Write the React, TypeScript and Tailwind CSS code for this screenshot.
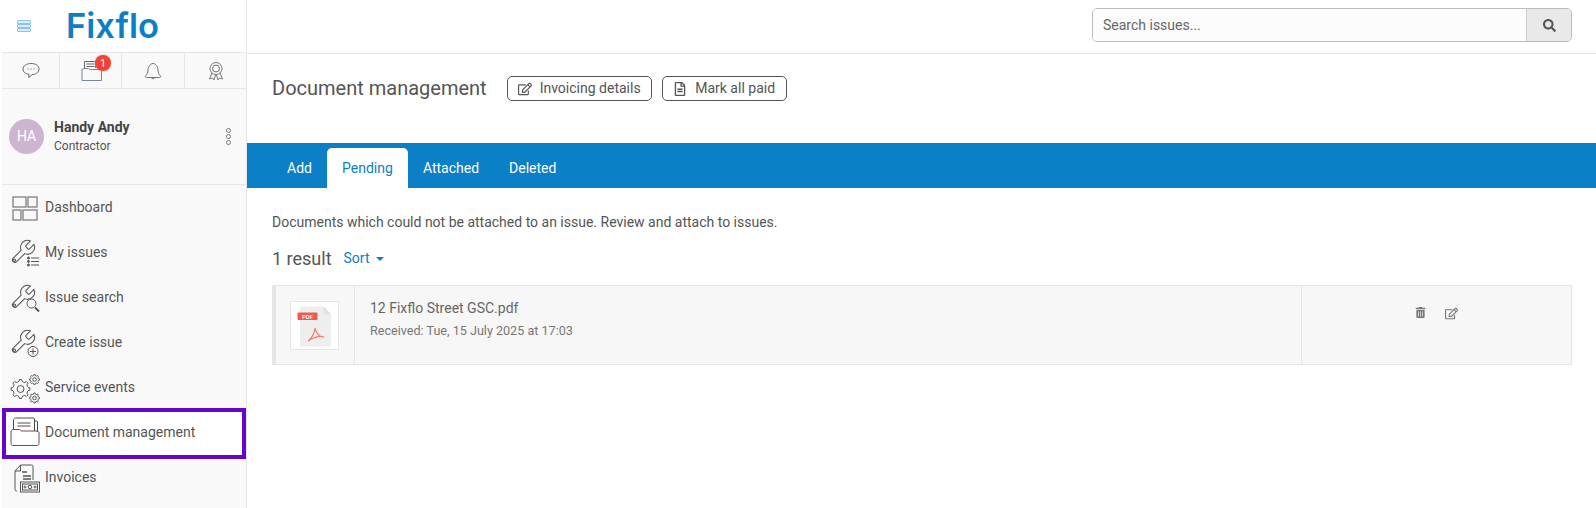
import React from "react";
import { FaSearch, FaRegEdit, FaTrashAlt, FaRegFileAlt } from "react-icons/fa";

const S = { fill: "none", stroke: "#555", strokeWidth: 1 } as const;

const Wrench = () => (
  <g transform="translate(0 1) scale(1.16)" fill="none" stroke="#555" strokeWidth="0.9">
    <path d="M14.700 6.300a1 1 0 0 0 0 1.400l1.600 1.600a1 1 0 0 0 1.400 0l3.770-3.770a6 6 0 0 1-7.940 7.940l-6.910 6.910a2.120 2.120 0 0 1-3-3l6.910-6.910a6 6 0 0 1 7.940-7.940l-3.760 3.760z" />
    <circle cx="4.600" cy="19.200" r="1.100" />
  </g>
);

function gearPath(cx: number, cy: number, r: number, teeth: number) {
  const out: string[] = [];
  const step = (Math.PI * 2) / teeth;
  for (let i = 0; i < teeth; i++) {
    const a = i * step;
    const pts: [number, number][] = [
      [r * 0.78, a - step * 0.5],
      [r * 0.82, a - step * 0.26],
      [r, a - step * 0.16],
      [r, a + step * 0.16],
      [r * 0.82, a + step * 0.26],
    ];
    for (const [rad, ang] of pts) {
      out.push(`${(cx + rad * Math.cos(ang)).toFixed(2)} ${(cy + rad * Math.sin(ang)).toFixed(2)}`);
    }
  }
  return "M" + out.join("L") + "Z";
}

const icons: Record<string, React.ReactNode> = {
  dash: (
    <g fill="none" stroke="#808080" strokeWidth="1.300">
      <rect x="4" y="5" width="13" height="10" /><rect x="19" y="5" width="9" height="10" /><rect x="4" y="18" width="8" height="10" /><rect x="14" y="18" width="14" height="10" />
    </g>
  ),
  list: (
    <g><Wrench /><g {...S}><path d="M22 21h8M22 24.500h8M22 28h8" strokeWidth="1.200" /><circle cx="19.500" cy="21" r="1" fill="#555" /><circle cx="19.500" cy="24.500" r="1" fill="#555" /><circle cx="19.500" cy="28" r="1" fill="#555" /></g></g>
  ),
  search: (
    <g><Wrench /><g {...S}><circle cx="22.500" cy="21.500" r="4.500" /><path d="M26 25.500l4 4" strokeWidth="2" /></g></g>
  ),
  plus: (
    <g><Wrench /><g {...S}><circle cx="24" cy="24.500" r="5" /><path d="M24 21.500v6M21 24.500h6" /></g></g>
  ),
  gear: (
    <g {...S}>
      <path d={gearPath(11.5, 17, 9.5, 8)} />
      <circle cx="11.500" cy="17" r="3.500" />
      <path d={gearPath(25.5, 7.5, 5, 8)} /><circle cx="25.500" cy="7.500" r="1.800" />
      <path d={gearPath(25.5, 26, 5, 8)} /><circle cx="25.500" cy="26" r="1.800" />
    </g>
  ),
  doc: (
    <g {...S} stroke="#4a4a4a">
      <path d="M4.500 12V3c0-1 1-2 2-2h18c.5 0 1 .5 1 1v12" /><path d="M25.500 4h2c.5 0 1 .5 1 1v10" />
      <path d="M8.500 6h13M8.500 9h13" strokeWidth="1.200" />
      <path d="M2 15c0-1.500 1-2.500 2-2.500h6.500l2 1.500H28c1 0 2 1 2 2v10.500c0 1-1 2-2 2H4c-1 0-2-1-2-2z" stroke="#6a4a5a" />
    </g>
  ),
  inv: (
    <g {...S}>
      <path d="M8 29H7.500c-1 0-1.500-.5-1.500-1.500V9l5.500-6h11c1 0 1.500.5 1.500 1.500V18" />
      <path d="M6 9h5.500V3" />
      <path d="M13 10h5M14 14h8M14 17h8" strokeWidth="1.300" />
      <rect x="11.500" y="20" width="19" height="10" />
      <rect x="13.500" y="22" width="15" height="6" />
      <circle cx="21" cy="25" r="1.800" /><circle cx="16" cy="25" r="1" /><circle cx="26" cy="25" r="1" />
    </g>
  ),
};

const NavIcon = ({ k }: { k: string }) => (
  <svg width="32" height="32" viewBox="0 0 32 32" className="shrink-0">{icons[k]}</svg>
);

const nav = [
  ["dash", "Dashboard"],
  ["list", "My issues"],
  ["search", "Issue search"],
  ["plus", "Create issue"],
  ["gear", "Service events"],
  ["doc", "Document management"],
  ["inv", "Invoices"],
];

export default function App() {
  return (
    <div className="flex h-[508px] w-[1596px] overflow-hidden bg-white text-[14px] text-[#555] font-['Roboto',sans-serif]">
      <aside className="ml-[2px] flex w-[245px] shrink-0 flex-col border-r border-[#e6e6e6] bg-[#f9f9f9]">
        <div className="flex h-[53px] shrink-0 items-center border-b border-[#e6e6e6] bg-white pl-[15px]">
          <div className="flex w-[14px] flex-col">
            <span className="h-[4px] rounded-[1px] border border-[#8cc4e6] bg-[#d9ecf8]" />
            <span className="h-[4px] rounded-[1px] border border-[#8cc4e6] bg-[#d9ecf8]" />
            <span className="h-[4px] rounded-[1px] border border-[#8cc4e6] bg-[#d9ecf8]" />
          </div>
          <span className="ml-[35px] font-['Inter',sans-serif] text-[34.500px] font-semibold leading-none text-[#0c80c6]">Fixflo</span>
        </div>

        <div className="flex h-[36px] shrink-0 border-b border-[#e6e6e6]">
          <div className="flex w-[58px] items-center justify-center border-r border-[#e6e6e6]">
            <svg width="18" height="17" viewBox="0 0 18 17" fill="none" stroke="#666" strokeWidth="1"><path d="M9 1.500c4.500 0 8 2 8 5.500s-3.500 5.500-7 5.500c-.5 1-2 2.500-3.500 3 .5-1 .5-2 .5-3.300C3.500 12 1 10 1 7s3.500-5.500 8-5.500z" /><path d="M5.500 7h1M8.500 7h1M11.500 7h1" /></svg>
          </div>
          <div className="relative flex w-[62px] items-center justify-start border-r border-[#e6e6e6] pl-[21px]">
            <svg width="22" height="22" viewBox="0 0 22 22" fill="none" stroke="#666" strokeWidth="1"><path d="M3.500 8V1.500h11V8" /><path d="M5.500 4h8M5.500 6.500h8" /><path d="M1 10c0-1 .5-1.500 1.500-1.500h5l1.500 1h10c1 0 1.500.5 1.500 1.500v9.500H1z" stroke="#77859a" /></svg>
            <span className="absolute left-[35px] top-[2px] flex h-[16px] w-[16px] items-center justify-center rounded-full bg-[#f44336] text-[10px] text-white shadow-[0_0_2px_#aaa]">1</span>
          </div>
          <div className="flex w-[63px] items-center justify-center border-r border-[#e6e6e6]">
            <svg width="18" height="20" viewBox="0 0 18 20" fill="none" stroke="#777" strokeWidth="1"><path d="M1.500 15c1.500-1.500 2.500-3 2.500-6s2-6.500 5-6.500 5 3.500 5 6.500 1 4.500 2.500 6c.5 1 0 1.500-1 1.500h-13c-1 0-1.500-.5-1-1.500z" /><path d="M7 16.500c.5 1.700 3.500 1.700 4 0" /></svg>
          </div>
          <div className="flex flex-1 items-center justify-center">
            <svg width="18" height="20" viewBox="0 0 18 20" fill="none" stroke="#777" strokeWidth="1"><circle cx="9" cy="7.500" r="6" /><circle cx="9" cy="7.500" r="3.500" /><path d="M5 12l-2.500 6 3-1 1.500 2 1.500-5M13 12l2.500 6-3-1-1.500 2-1.500-5" /></svg>
          </div>
        </div>

        <div className="flex h-[96px] shrink-0 items-center border-b border-[#e6e6e6] pl-[7px] pr-[15px]">
          <div className="flex h-[35px] w-[35px] items-center justify-center rounded-full bg-[#cdb4d0] text-[14px] text-white">HA</div>
          <div className="ml-[10px] mb-[2px] flex-1">
            <div className="text-[14px] font-bold leading-[20px] text-[#444]">Handy Andy</div>
            <div className="text-[12px] leading-[18px]">Contractor</div>
          </div>
          <div className="flex flex-col gap-[1px]">
            <span className="h-[5px] w-[5px] rounded-full border border-[#777]" />
            <span className="h-[5px] w-[5px] rounded-full border border-[#777]" />
            <span className="h-[5px] w-[5px] rounded-full border border-[#777]" />
          </div>
        </div>

        <nav className="flex flex-col">
          {nav.map(([k, label]) =>
            k === "doc" ? (
              <div key={k} className="relative -mt-[2px] -mb-[4px] flex h-[51px] items-center gap-[4px] border-[4px] border-[#6606c9] bg-white pb-[2px] pl-[3px]">
                <NavIcon k={k} />
                <span>{label}</span>
              </div>
            ) : (
              <div key={k} className="flex h-[45px] items-center gap-[4px] pl-[7px]">
                <NavIcon k={k} />
                <span>{label}</span>
              </div>
            )
          )}
        </nav>
      </aside>

      <main className="flex min-w-0 flex-1 flex-col">
        <div className="flex h-[54px] shrink-0 items-start justify-end border-b border-[#e6e6e6] pr-[24px] pt-[8px]">
          <div className="flex h-[34px] w-[480px] overflow-hidden rounded-[5px] border border-[#bbb]">
            <div className="flex flex-1 items-center bg-[#fcfcfc] pl-[10px] text-[#666]">Search issues...</div>
            <div className="flex w-[45px] items-center justify-center border-l border-[#ccc] bg-[#e9e9e9] text-[#555]"><FaSearch size={13} /></div>
          </div>
        </div>

        <div className="flex h-[89px] shrink-0 items-start pl-[25px] pt-[20px]">
          <h1 className="text-[20px] font-normal leading-[28px] text-[#555]">Document management</h1>
          <button className="ml-[20px] mt-[2px] flex h-[25px] w-[145px] items-center justify-center gap-[8px] rounded-[5px] border border-[#555] text-[14px]">
            <FaRegEdit size={14} /> Invoicing details
          </button>
          <button className="ml-[10px] mt-[2px] flex h-[25px] w-[125px] items-center justify-center gap-[8px] rounded-[5px] border border-[#555] text-[14px]">
            <FaRegFileAlt size={14} /> Mark all paid
          </button>
        </div>

        <div className="flex h-[45px] shrink-0 items-end bg-[#0c80c6] pl-[25px] text-white">
          <div className="flex h-[40px] items-center px-[15px]">Add</div>
          <div className="flex h-[40px] w-[81px] items-center justify-center rounded-t-[5px] bg-white text-[#0c80c6]">Pending</div>
          <div className="flex h-[40px] items-center px-[15px]">Attached</div>
          <div className="flex h-[40px] items-center px-[15px]">Deleted</div>
        </div>

        <div className="flex flex-col pl-[25px] pr-[24px]">
          <p className="mt-[24px] leading-[20px]">Documents which could not be attached to an issue. Review and attach to issues.</p>
          <div className="mt-[14px] flex h-[24px] items-center">
            <span className="text-[18px] text-[#555]">1 result</span>
            <span className="ml-[12px] text-[#0c80c6]">Sort</span>
            <span className="ml-[6px] mt-[1px] h-0 w-0 border-x-[4px] border-t-[4px] border-x-transparent border-t-[#0c80c6]" />
          </div>
          <div className="mt-[15px] flex h-[80px] border border-l-[4px] border-[#e6e6e6] bg-[#f7f7f7]">
            <div className="flex w-[79px] shrink-0 justify-center border-r border-[#e6e6e6] pr-[2px] pt-[15px]">
              <div className="flex h-[49px] w-[49px] items-center justify-center border border-[#e6e6e6] bg-white">
                <svg width="40" height="42" viewBox="0 0 40 42">
                  <path d="M6 1.500h24l7 8v32H6z" fill="#eee" />
                  <path d="M30 1.500l7 8h-7z" fill="#e2e2e2" />
                  <rect x="3.500" y="7.500" width="20" height="7.500" rx="1" fill="#ef5b45" />
                  <text x="13.500" y="13.500" textAnchor="middle" fontSize="6" fontWeight="500" fill="#fff">PDF</text>
                  <path d="M21 23c-.5 5-3.500 11-7 13 3-2.500 11-6 16-4-4 .5-8-4-9-9z" fill="none" stroke="#f0806f" strokeWidth="1.200" />
                </svg>
              </div>
            </div>
            <div className="flex w-[947px] shrink-0 flex-col border-r border-[#e6e6e6] pl-[15px] pt-[12px]">
              <div className="text-[14px] leading-[20px] text-[#666]">12 Fixflo Street GSC.pdf</div>
              <div className="mt-[3px] text-[12.600px] leading-[20px] text-[#777]">Received: Tue, 15 July 2025 at 17:03</div>
            </div>
            <div className="flex flex-1 justify-center gap-[19px] pt-[21px] text-[#777]">
              <FaTrashAlt size={11} />
              <FaRegEdit size={13} />
            </div>
          </div>
        </div>
      </main>
    </div>
  );
}
